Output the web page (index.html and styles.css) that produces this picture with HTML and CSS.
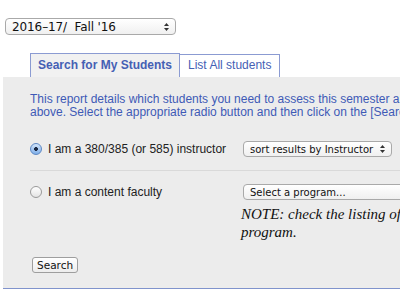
FILE: index.html
```html
<!DOCTYPE html>
<html lang="en">
<head>
    <meta charset="UTF-8">
    <title>Student Assessment Search</title>
    <link rel="stylesheet" href="styles.css">
</head>
<body>
    <form class="page">
        <div class="term-bar">
            <span class="select-wrap">
                <select class="term-select">
                    <option>2016&ndash;17/&nbsp; Fall '16</option>
                </select>
                <svg class="arrows" width="5" height="8" viewBox="0 0 5 8"><polygon points="0,3 2.5,0 5,3"/><polygon points="0,5 2.5,8 5,5"/></svg>
            </span>
        </div>

        <ul class="tabs">
            <li class="tab active">Search for My Students</li>
            <li class="tab">List All students</li>
        </ul>

        <div class="panel">
            <p class="intro">This report details which students you need to assess this semester and year selected above. Select the appropriate radio button and then click on the [Search] button.</p>

            <div class="option first">
                <label class="choice"><input type="radio" name="role" checked> I am a 380/385 (or 585) instructor</label>
                <div class="control">
                    <span class="select-wrap">
                        <select class="mini-select sort">
                            <option>sort results by Instructor</option>
                        </select>
                        <svg class="arrows" width="5" height="8" viewBox="0 0 5 8"><polygon points="0,3 2.5,0 5,3"/><polygon points="0,5 2.5,8 5,5"/></svg>
                    </span>
                </div>
            </div>

            <div class="option">
                <label class="choice"><input type="radio" name="role"> I am a content faculty</label>
                <div class="control">
                    <span class="select-wrap">
                        <select class="mini-select program">
                            <option>Select a program...</option>
                        </select>
                    </span>
                    <p class="note">NOTE: check the listing of students in your program.</p>
                </div>
            </div>

            <button type="button" class="search-btn">Search</button>
        </div>
    </form>
</body>
</html>
```

FILE: styles.css
```css
* {
    box-sizing: border-box;
}

body {
    margin: 0;
    background: #fff;
    overflow: hidden;
    font-family: "Liberation Sans", Arial, sans-serif;
    font-size: 12px;
    color: #222;
}

.page {
    width: 760px;
}

.term-bar {
    padding: 18px 0 0 5px;
}

.select-wrap {
    position: relative;
    display: inline-block;
    vertical-align: top;
}

.select-wrap .arrows {
    position: absolute;
    right: 7px;
    top: 4px;
    fill: #333;
    pointer-events: none;
}

.term-select,
.mini-select {
    -webkit-appearance: none;
    appearance: none;
    display: block;
    margin: 0;
    border: 1px solid #a9a9a9;
    border-radius: 4px;
    background: linear-gradient(#ffffff, #f0f0f0);
    font-family: "DejaVu Sans", sans-serif;
    color: #111;
}

.term-select {
    width: 171px;
    height: 17px;
    padding: 0 20px 0 6px;
    font-size: 12px;
    letter-spacing: -0.1px;
}

.term-select + .arrows {
    top: 5px;
}

.mini-select {
    height: 16px;
    padding: 0 8px 0 6px;
    font-size: 10px;
}

.mini-select.sort {
    width: 149px;
}

.mini-select.program {
    width: 220px;
}

.tabs {
    display: flex;
    align-items: flex-end;
    list-style: none;
    margin: 18px 0 0;
    padding: 0 0 0 30px;
}

.tab {
    height: 23px;
    padding: 0 8px;
    border: 1px solid #8b9bd2;
    border-bottom: none;
    background: #fff;
    color: #4560b4;
    line-height: 21px;
}

.tab.active {
    height: 24px;
    padding: 0 7px;
    background: #f1f1f1;
    font-weight: bold;
    line-height: 23px;
}

.tab + .tab {
    border-left: none;
}

.panel {
    margin-left: 3px;
    padding: 16px 0 15px 27px;
    background: #ececec;
    border-bottom: 1px solid #8093cc;
}

.intro {
    width: 480px;
    margin: 0;
    line-height: 13px;
    color: #3e5ab6;
}

.option {
    display: grid;
    grid-template-columns: 213px auto;
    align-items: start;
}

.option.first {
    margin-top: 22px;
    padding-bottom: 13px;
    border-bottom: 1px solid #d9d9d9;
}

.option.first + .option {
    padding-top: 13px;
}

.choice {
    display: flex;
    align-items: center;
    gap: 6px;
    height: 16px;
    color: #222;
}

.choice input {
    -webkit-appearance: none;
    appearance: none;
    width: 12px;
    height: 12px;
    margin: 0;
    border: 1px solid #9a9a9a;
    border-radius: 50%;
    background: linear-gradient(#ffffff, #e4e4e4);
}

.choice input:checked {
    border-color: #5d88c4;
    background: radial-gradient(circle, #1c2a44 0 1.6px, transparent 2.2px),
                linear-gradient(#d4e6fb, #7eaee8);
}

.note {
    width: 300px;
    margin: 5px 0 0 -2px;
    font-family: "Liberation Serif", "Times New Roman", serif;
    font-style: italic;
    font-size: 15px;
    line-height: 18px;
    color: #111;
}

.search-btn {
    -webkit-appearance: none;
    appearance: none;
    display: block;
    height: 16px;
    margin: 16px 0 0 2px;
    padding: 0 4px;
    border: 1px solid #9e9e9e;
    border-radius: 3px;
    background: linear-gradient(#ffffff, #ededed);
    font-family: "DejaVu Sans", sans-serif;
    font-size: 10.5px;
    line-height: 14px;
    color: #111;
}
```
